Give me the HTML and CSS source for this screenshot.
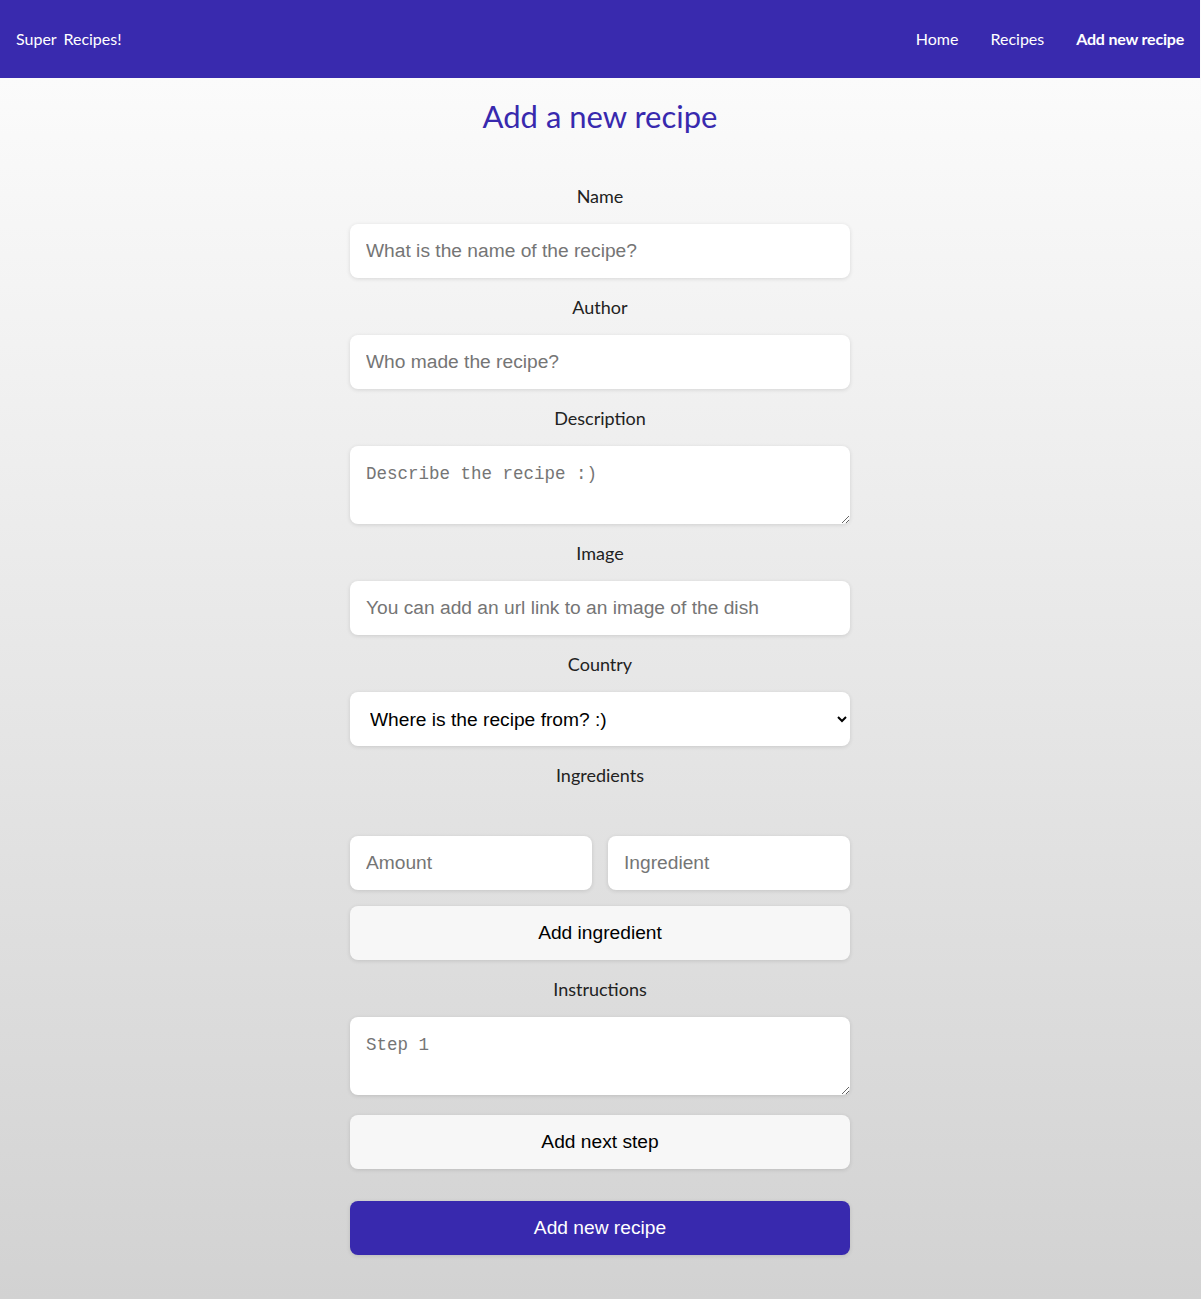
FILE: index.html
```html
<!DOCTYPE html>
<html lang="en">
<head>
<meta charset="utf-8">
<title>Super Recipes!</title>
<link rel="stylesheet" href="styles.css">
</head>
<body>
<header class="topbar">
  <a class="brand" href="#">Super Recipes!</a>
  <nav class="nav">
    <a href="#">Home</a>
    <a href="#">Recipes</a>
    <a class="active" href="#">Add new recipe</a>
  </nav>
</header>
<main class="page">
  <h1 class="title">Add a new recipe</h1>
  <form class="form">
    <label class="label" for="name">Name</label>
    <input class="field" id="name" type="text" placeholder="What is the name of the recipe?">
    <label class="label" for="author">Author</label>
    <input class="field" id="author" type="text" placeholder="Who made the recipe?">
    <label class="label" for="desc">Description</label>
    <textarea class="field area" id="desc" placeholder="Describe the recipe :)"></textarea>
    <label class="label" for="image">Image</label>
    <input class="field" id="image" type="text" placeholder="You can add an url link to an image of the dish">
    <label class="label" for="country">Country</label>
    <select class="field select" id="country">
      <option>Where is the recipe from? :)</option>
    </select>
    <div class="label">Ingredients</div>
    <div class="ing-list"></div>
    <div class="ing-row">
      <input class="field" type="text" placeholder="Amount">
      <input class="field" type="text" placeholder="Ingredient">
    </div>
    <button class="btn btn-ing" type="button">Add ingredient</button>
    <label class="label" for="step1">Instructions</label>
    <textarea class="field area" id="step1" placeholder="Step 1"></textarea>
    <button class="btn btn-step" type="button">Add next step</button>
    <button class="btn btn-submit" type="submit">Add new recipe</button>
  </form>
</main>
</body>
</html>
```
FILE: styles.css
```css
* { box-sizing: border-box; }
html, body { margin: 0; padding: 0; }
body {
  width: 1200px;
  min-height: 100vh;
  background: linear-gradient(#fbfbfb 78px, #f7f7f7 15%, #d2d2d2 100%);
  font-family: "Lato", "Noto Sans", sans-serif;
  color: #222;
}
.topbar {
  height: 78px;
  background: #392aae;
  display: flex;
  align-items: center;
  justify-content: space-between;
  padding: 0 16px 2px;
}
.topbar a { color: #fff; text-decoration: none; font-size: 16px; }
.brand { word-spacing: 3px; }
.nav { display: flex; gap: 32px; }
.nav .active { font-weight: 700; letter-spacing: -0.2px; }
.page { display: flex; flex-direction: column; align-items: center; padding-bottom: 44px; }
.title {
  margin: 0;
  height: 89px;
  line-height: 76px;
  font-size: 31px;
  font-weight: 400;
  color: #3829ae;
}
.form { width: 500px; display: flex; flex-direction: column; }
.label {
  display: block;
  height: 57px;
  line-height: 59px;
  text-align: center;
  font-size: 18px;
  color: #222;
}
.field {
  display: block;
  width: 100%;
  height: 54px;
  border: none;
  border-radius: 8px;
  background: #fff;
  box-shadow: 0 1px 4px rgba(0, 0, 0, 0.12);
  padding: 0 16px;
  font-family: "Liberation Sans", Arial, sans-serif;
  font-size: 19.2px;
  color: #000;
  outline: none;
}
.field::placeholder { color: #757575; }
.area {
  height: 78px;
  padding: 18px 16px 16px;
  font-family: "Liberation Mono", monospace;
  font-size: 17.5px;
  resize: vertical;
}
.select { padding-left: 16px; padding-right: 6px; }
.ing-list { height: 33px; }
.ing-row { display: flex; gap: 16px; }
.ing-row .field { flex: 1; }
.btn {
  height: 54px;
  border: none;
  border-radius: 8px;
  background: #f7f7f7;
  box-shadow: 0 1px 4px rgba(0, 0, 0, 0.12);
  font-family: "Liberation Sans", Arial, sans-serif;
  font-size: 19.2px;
  color: #000;
  cursor: pointer;
}
.btn-ing { margin-top: 16px; }
.btn-step { margin-top: 20px; }
.btn-submit { margin-top: 32px; background: #3829ae; color: #fff; }
```
